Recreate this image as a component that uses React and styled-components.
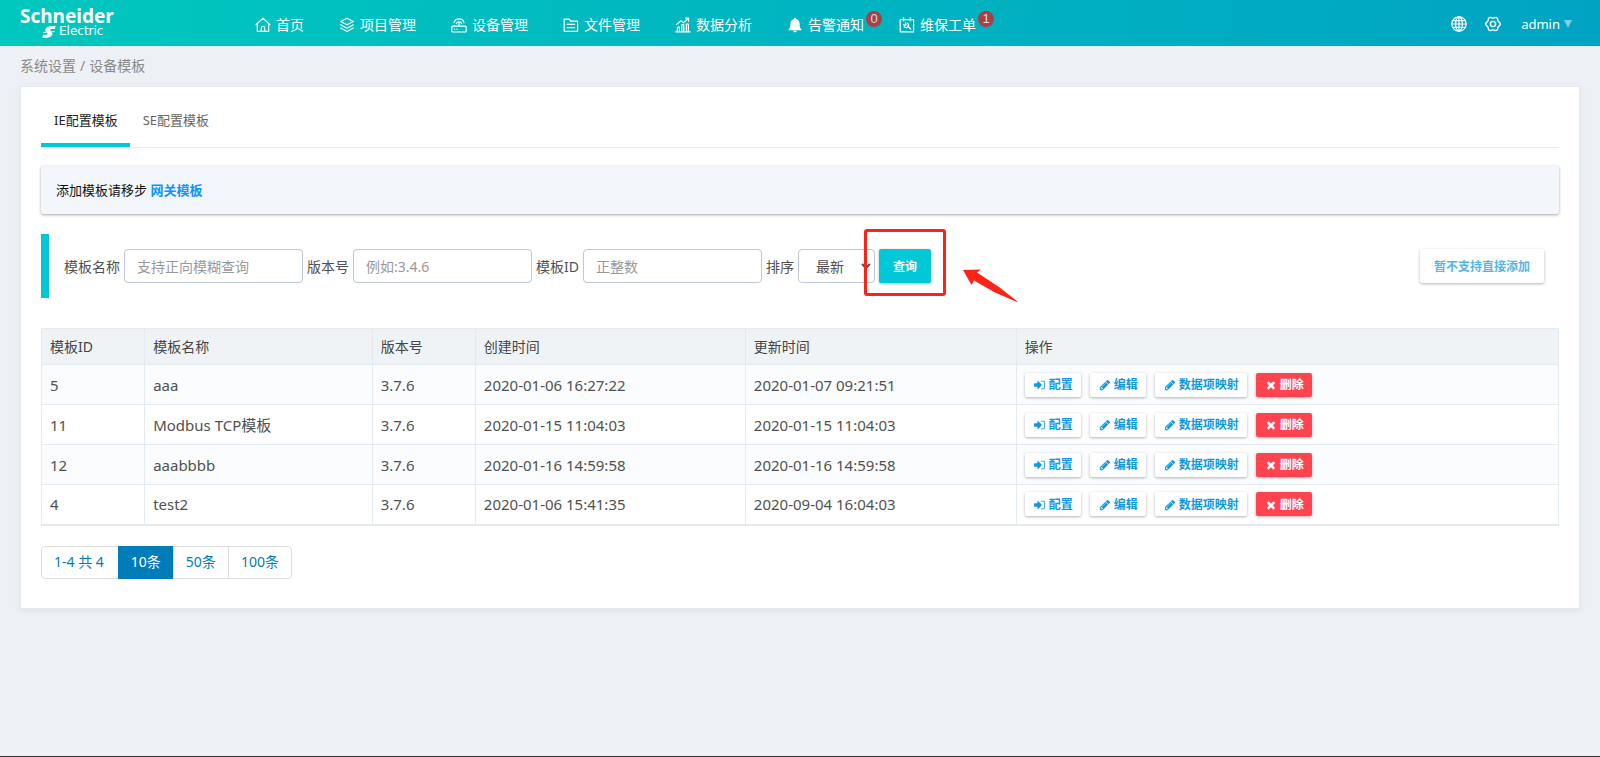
import React from "react";
import styled, { createGlobalStyle, css } from "styled-components";

const Global = createGlobalStyle`
  *, *::before, *::after { box-sizing: border-box; }
  html { height: 100%; }
  body {
    margin: 0;
    min-height: 100%;
    background: #edf1f5;
    color: #515151;
    font: 14px/20px "Noto Sans", "Noto Sans CJK SC", sans-serif;
  }
  #root { display: flex; min-height: 100vh; }
  button, input, select { font: inherit; color: inherit; margin: 0; }
  a { text-decoration: none; color: inherit; }
`;

const Page = styled.div`
  flex: 1;
  min-width: 0;
  display: flex;
  flex-direction: column;
  border-bottom: 1px solid #333;
`;

/* ---------- header ---------- */

const Header = styled.header`
  display: flex;
  align-items: center;
  height: 46px;
  padding: 0 28px 0 20px;
  color: #fff;
  background: linear-gradient(100deg, #00c8be 0%, #00b5c1 50%, #00a4c3 100%);
`;

const Logo = styled.a`
  width: 235px;
  display: flex;
  flex-direction: column;
  align-items: flex-start;
`;

const LogoName = styled.span`
  font: bold 19px/17px "Noto Sans", sans-serif;
`;

const LogoSub = styled.span`
  display: flex;
  align-items: center;
  gap: 3px;
  padding-left: 22px;
  font: 12px/13px "DejaVu Sans", sans-serif;
`;

const Nav = styled.nav`
  flex: 1;
  display: flex;
  gap: 35px;
`;

const NavItem = styled.a`
  position: relative;
  display: flex;
  align-items: center;
  gap: 5px;
  white-space: nowrap;
  padding-top: 4px;
`;

const Badge = styled.span`
  position: absolute;
  left: 100%;
  top: 0;
  margin-left: 2px;
  width: 16px;
  height: 16px;
  border-radius: 8px;
  background: #a94046;
  color: #d5dde0;
  font: 13px/16px "Liberation Sans", sans-serif;
  text-align: center;
`;

const Tools = styled.div`
  display: flex;
  align-items: center;
  gap: 18px;
  padding-top: 1px;
`;

const ToolButton = styled.button`
  display: flex;
  align-items: center;
  gap: 4px;
  padding: 0;
  border: 0;
  background: none;
  color: #fff;
  font-size: ${(p) => (p.$text ? "13px" : "14px")};
  margin-left: ${(p) => (p.$text ? "2px" : "0")};
`;

const Caret = styled.span`
  border: 4px solid transparent;
  border-top: 8px solid #7fd1e1;
  border-bottom: 0;
`;

const Icon = styled.svg.attrs({ "aria-hidden": true })`
  width: ${(p) => p.$size || 16}px;
  height: ${(p) => p.$size || 16}px;
  flex: none;
  fill: ${(p) => (p.$solid ? "currentColor" : "none")};
  stroke: ${(p) => (p.$solid ? "none" : "currentColor")};
  stroke-width: ${(p) => p.$stroke || 1.2};
  stroke-linejoin: round;
  stroke-linecap: round;
`;

const HomeIcon = () => (
  <Icon viewBox="0 0 16 16">
    <path d="M1 7.6 8 1.2l7 6.4M2.3 7v7.4h11.4V7M6.3 14.2v-3.1a1.7 1.7 0 0 1 3.4 0v3.1" />
  </Icon>
);
const LayersIcon = () => (
  <Icon viewBox="0 0 16 16">
    <path d="m8 1.2 6.3 3.3L8 7.8 1.7 4.5zM1.7 7.9 8 11.2l6.3-3.3M1.7 11.1 8 14.6l6.3-3.5" />
  </Icon>
);
const DeviceIcon = () => (
  <Icon viewBox="0 0 16 16">
    <rect x=".8" y="9.2" width="14.4" height="5.8" rx="1" />
    <path d="M8 9V5.6M3 5.600a5.200 5.200 0 0 1 10 0M5.300 6.600a2.900 2.900 0 0 1 5.400 0M3.4 12.2h.2M5.8 12.2h.2" />
  </Icon>
);
const FolderIcon = () => (
  <Icon viewBox="0 0 16 16">
    <path d="M1.2 2.2h5l1.6 2h6.8v10.2H1.2zM4.2 7.4h7.4M4.2 10.6h7.4" />
  </Icon>
);
const ChartIcon = () => (
  <Icon viewBox="0 0 16 16">
    <path d="M.8 14.8h14.4M2.4 14.6V10h2v4.6M6.8 14.6V7.6h2v7M11.4 14.6V7h2v7.6M1.6 7.4 6 3.8l2.6 2L13.4 1.4M10.6 1.2h3v3" />
  </Icon>
);
const BellIcon = () => (
  <Icon viewBox="0 0 16 16" $solid>
    <path d="M8 .8c.7 0 1.1.4 1.1 1.1 2.4.6 3.5 2.4 3.5 4.8 0 3.200.5 4.600 2 5.800v.7H1.400v-.7c1.500-1.200 2-2.600 2-5.800 0-2.400 1.100-4.200 3.500-4.800C6.900 1.200 7.300.8 8 .8zM6.200 13.800h3.600a1.800 1.500 0 0 1-3.600 0z" />
  </Icon>
);
const OrderIcon = () => (
  <Icon viewBox="0 0 16 16">
    <path d="M1.200 2.600h13.400v12.200H1.200zM4.600.8v3M11.200.8v3M8.600 9l3 3" />
    <path d="M8.600 6.200a2.400 2.400 0 1 1-3.400 3.300M4.600 7.600l1.600.8.900-.9-.6-1.600" />
  </Icon>
);
const GlobeIcon = () => (
  <Icon viewBox="0 0 16 16">
    <circle cx="8" cy="8" r="7.200" />
    <ellipse cx="8" cy="8" rx="3.400" ry="7.200" />
    <path d="M8 .8v14.400M.8 8h14.400M1.800 4.600h12.400M1.800 11.400h12.400" />
  </Icon>
);

/* Six-lobed outline of the settings gear. */
const gearPoints = Array.from({ length: 72 }, (_, i) => {
  const a = (i * Math.PI) / 36;
  const r = 6.6 + 0.7 * Math.cos(6 * a);
  return `${(8 + r * Math.cos(a)).toFixed(2)},${(8 + r * Math.sin(a)).toFixed(2)}`;
}).join(" ");

const GearIcon = () => (
  <Icon viewBox="0 0 16 16" $stroke={1.4}>
    <polygon points={gearPoints} />
    <circle cx="8" cy="8" r="2.600" />
  </Icon>
);
const EmblemIcon = () => (
  <Icon viewBox="0 0 15 14" $solid $size={14}>
    <path d="M14.600.6C10 .2 5.800.8 4 3.200 2.900 4.700 3.700 6 5 6.800 2.900 6.300 1.400 6.800.9 7.700h4.300c1.500.9 1 2.300-.9 2.300H1.100L.2 13.200c4.400.6 8.800-.2 10.500-2.700 1-1.500.6-2.700-.7-3.500 2.100.4 3.500 0 4-.900H9.600C8.200 5.200 8.700 3.900 10.500 3.900h3.200z" />
  </Icon>
);

const faPaths = {
  signIn:
    "M1184 896q0 26-19 45l-544 544q-19 19-45 19t-45-19-19-45v-288h-448q-26 0-45-19t-19-45v-384q0-26 19-45t45-19h448v-288q0-26 19-45t45-19 45 19l544 544q19 19 19 45zm480-352v704q0 119-84.500 203.500t-203.500 84.500h-320q-13 0-22.500-9.500t-9.500-22.500q0-4-1-20t-.5-26.500 3-23.500 10-19.500 20.500-6.500h320q66 0 113-47t47-113v-704q0-66-47-113t-113-47h-312l-11.500-1-11.500-3-8-5.500-7-9-2-13.500q0-4-1-20t-.5-26.500 3-23.500 10-19.500 20.500-6.500h320q119 0 203.500 84.500t84.500 203.500z",
  pencil:
    "M491 1536l91-91-235-235-91 91v107h128v128h107zm523-928q0-22-22-22-10 0-17 7l-542 542q-7 7-7 17 0 22 22 22 10 0 17-7l542-542q7-7 7-17zm-54-192l416 416-832 832h-416v-416zm683 96q0 53-37 90l-166 166-416-416 166-165q36-38 90-38 53 0 91 38l235 234q37 39 37 91z",
  times:
    "M1490 1322q0 40-28 68l-136 136q-28 28-68 28t-68-28l-294-294-294 294q-28 28-68 28t-68-28l-136-136q-28-28-28-68t28-68l294-294-294-294q-28-28-28-68t28-68l136-136q28-28 68-28t68 28l294 294 294-294q28-28 68-28t68 28l136 136q28 28 28 68t-28 68l-294 294 294 294q28 28 28 68z",
};

const SolidIcon = ({ name }) => (
  <Icon viewBox="0 0 1792 1792" $solid $size={12}>
    <path d={faPaths[name]} />
  </Icon>
);

/* ---------- content ---------- */

const Main = styled.main`
  padding: 0 20px 20px;
`;

const Breadcrumb = styled.nav`
  display: flex;
  gap: 4px;
  padding: 10px 0;
  color: #898989;
`;

const Card = styled.section`
  padding: 20px 20px 29px;
  background: #fff;
  border: 1px solid #e3ebf2;
  box-shadow: 0 2px 5px 1px rgba(0, 0, 0, 0.05);
`;

const Tabs = styled.div`
  display: flex;
  border-bottom: 1px solid #e9edf1;
`;

const Tab = styled.button`
  padding: 3px 12px 13px 13px;
  border: 0;
  border-bottom: 4px solid ${(p) => (p.$active ? "#00c8d7" : "transparent")};
  background: none;
  color: ${(p) => (p.$active ? "#222" : "#666")};
  font-size: 13px;
`;

const Notice = styled.p`
  margin: 18px 0 20px;
  padding: 14px 15px;
  border-radius: 2px;
  background: #f3f6fb;
  box-shadow: 0 1px 3px rgba(0, 0, 0, 0.35);
  color: #111;
  font-size: 13px;

  a {
    color: #0f94ff;
    font-weight: bold;
  }
`;

const Filters = styled.form`
  display: flex;
  align-items: center;
  gap: 4px;
  height: 64px;
  margin-bottom: 30px;
  padding: 0 15px;
  border-left: 8px solid #00c8d7;
`;

const Label = styled.label`
  padding-top: 1px;
  white-space: nowrap;
`;

const field = css`
  height: 34px;
  border: 1px solid #bcc8d8;
  border-radius: 4px;
  background-color: #fff;
`;

const TextField = styled.input`
  ${field}
  width: 179px;
  padding: 0 12px;

  &::placeholder {
    color: #999;
  }
`;

const Select = styled.select`
  ${field}
  width: 77px;
  padding: 0 0 0 13px;
`;

const tones = {
  primary: css`
    background: #00c8d7;
    color: #fff;
  `,
  plain: css`
    background: #fff;
    color: #0f9ade;
  `,
  muted: css`
    background: #fff;
    color: #50b8e6;
  `,
  danger: css`
    background: #ff4450;
    color: #fff;
  `,
};

const Button = styled.button`
  display: inline-flex;
  align-items: center;
  justify-content: center;
  gap: 3px;
  height: ${(p) => (p.$small ? 24 : 34)}px;
  padding: ${(p) => (p.$small ? "1px 8px 0 9px" : "1px 14px 0")};
  border: 0;
  border-radius: 2px;
  box-shadow: 0 1px 3px rgba(0, 0, 0, 0.3);
  font-size: 12px;
  font-weight: bold;
  white-space: nowrap;
  ${(p) => tones[p.$tone]}
`;

const Highlighted = styled.span`
  position: relative;
  display: flex;
  margin-right: auto;
`;

const HighlightBox = styled.span`
  position: absolute;
  inset: -20px -15px -13px -15px;
  border: 3px solid #ff2315;
  border-radius: 3px;
  pointer-events: none;
`;

const HighlightArrow = styled.svg`
  position: absolute;
  left: 100%;
  top: 20px;
  margin-left: 31px;
  width: 57px;
  height: 35px;
  fill: #ff2315;
`;

const Table = styled.table`
  width: 100%;
  table-layout: fixed;
  border-collapse: collapse;
  border: 1px solid #e3ebf2;
  border-bottom: 2px solid #e3eaef;
  margin-bottom: 20px;
`;

const Col = styled.col`
  width: ${(p) => p.$width};
`;

const HeadCell = styled.th`
  height: 36px;
  padding: 0 8px;
  border: 1px solid #e3ebf2;
  background: #f0f3f6;
  font-weight: normal;
  color: #444;
  text-align: left;
`;

const Row = styled.tr`
  height: 40px;

  &:nth-child(odd) {
    background: #fbfcfe;
  }
`;

const Cell = styled.td`
  padding: 0 8px;
  border: 1px solid #e3ebf2;
  font-size: 15px;
  white-space: nowrap;
`;

const Actions = styled.div`
  display: flex;
  gap: 9px;
`;

const Pager = styled.div`
  display: flex;
  width: fit-content;
`;

const PageButton = styled.button`
  height: 33px;
  padding: 0 12px;
  border: 1px solid ${(p) => (p.$active ? "#007db8" : "#ddd")};
  background: ${(p) => (p.$active ? "#007db8" : "#fff")};
  color: ${(p) => (p.$active ? "#fff" : "#007db8")};

  & + & {
    margin-left: -1px;
  }
  &:first-child {
    padding: 0 14px 0 12px;
    border-radius: 4px 0 0 4px;
  }
  &:last-child {
    border-radius: 0 4px 4px 0;
  }
`;

const navItems = [
  { label: "首页", icon: HomeIcon },
  { label: "项目管理", icon: LayersIcon },
  { label: "设备管理", icon: DeviceIcon },
  { label: "文件管理", icon: FolderIcon },
  { label: "数据分析", icon: ChartIcon },
  { label: "告警通知", icon: BellIcon, badge: 0 },
  { label: "维保工单", icon: OrderIcon, badge: 1 },
];

const columns = [
  { title: "模板ID", width: "6.8%" },
  { title: "模板名称", width: "15%" },
  { title: "版本号", width: "6.8%" },
  { title: "创建时间", width: "17.8%" },
  { title: "更新时间", width: "17.85%" },
  { title: "操作", width: "auto" },
];

const rows = [
  ["5", "aaa", "3.7.6", "2020-01-06 16:27:22", "2020-01-07 09:21:51"],
  ["11", "Modbus TCP模板", "3.7.6", "2020-01-15 11:04:03", "2020-01-15 11:04:03"],
  ["12", "aaabbbb", "3.7.6", "2020-01-16 14:59:58", "2020-01-16 14:59:58"],
  ["4", "test2", "3.7.6", "2020-01-06 15:41:35", "2020-09-04 16:04:03"],
];

const actions = [
  { label: "配置", icon: "signIn", tone: "plain" },
  { label: "编辑", icon: "pencil", tone: "plain" },
  { label: "数据项映射", icon: "pencil", tone: "plain" },
  { label: "删除", icon: "times", tone: "danger" },
];

export default function App() {
  return (
    <Page>
      <Global />
      <Header>
        <Logo href="#">
          <LogoName>Schneider</LogoName>
          <LogoSub>
            <EmblemIcon />
            Electric
          </LogoSub>
        </Logo>
        <Nav>
          {navItems.map(({ label, icon: ItemIcon, badge }) => (
            <NavItem href="#" key={label}>
              <ItemIcon />
              {label}
              {badge !== undefined && <Badge>{badge}</Badge>}
            </NavItem>
          ))}
        </Nav>
        <Tools>
          <ToolButton aria-label="语言">
            <GlobeIcon />
          </ToolButton>
          <ToolButton aria-label="设置">
            <GearIcon />
          </ToolButton>
          <ToolButton $text>
            admin
            <Caret />
          </ToolButton>
        </Tools>
      </Header>

      <Main>
        <Breadcrumb>
          <a href="#">系统设置</a>
          <span>/</span>
          <span>设备模板</span>
        </Breadcrumb>

        <Card>
          <Tabs role="tablist">
            <Tab role="tab" aria-selected="true" $active>
              IE配置模板
            </Tab>
            <Tab role="tab" aria-selected="false">
              SE配置模板
            </Tab>
          </Tabs>

          <Notice>
            添加模板请移步 <a href="#">网关模板</a>
          </Notice>

          <Filters onSubmit={(e) => e.preventDefault()}>
            <Label htmlFor="name">模板名称</Label>
            <TextField id="name" placeholder="支持正向模糊查询" />
            <Label htmlFor="version">版本号</Label>
            <TextField id="version" placeholder="例如:3.4.6" />
            <Label htmlFor="templateId">模板ID</Label>
            <TextField id="templateId" placeholder="正整数" />
            <Label htmlFor="sort">排序</Label>
            <Select id="sort" defaultValue="latest">
              <option value="latest">最新</option>
            </Select>
            <Highlighted>
              <Button type="submit" $tone="primary">
                查询
              </Button>
              <HighlightBox />
              <HighlightArrow viewBox="0 0 57 35" aria-hidden="true">
                <path d="M1 1 19 .5l-4 3L37 18l18.500 14.500-.5.5L33 23.500 12 11.500 9.500 16z" />
              </HighlightArrow>
            </Highlighted>
            <Button type="button" $tone="muted">
              暂不支持直接添加
            </Button>
          </Filters>

          <Table>
            <colgroup>
              {columns.map((c) => (
                <Col key={c.title} $width={c.width} />
              ))}
            </colgroup>
            <thead>
              <tr>
                {columns.map((c) => (
                  <HeadCell key={c.title}>{c.title}</HeadCell>
                ))}
              </tr>
            </thead>
            <tbody>
              {rows.map((row) => (
                <Row key={row[0]}>
                  {row.map((value, i) => (
                    <Cell key={columns[i].title}>{value}</Cell>
                  ))}
                  <Cell>
                    <Actions>
                      {actions.map((a) => (
                        <Button key={a.label} type="button" $small $tone={a.tone}>
                          <SolidIcon name={a.icon} />
                          {a.label}
                        </Button>
                      ))}
                    </Actions>
                  </Cell>
                </Row>
              ))}
            </tbody>
          </Table>

          <Pager>
            <PageButton>1-4 共 4</PageButton>
            <PageButton $active>10条</PageButton>
            <PageButton>50条</PageButton>
            <PageButton>100条</PageButton>
          </Pager>
        </Card>
      </Main>
    </Page>
  );
}
